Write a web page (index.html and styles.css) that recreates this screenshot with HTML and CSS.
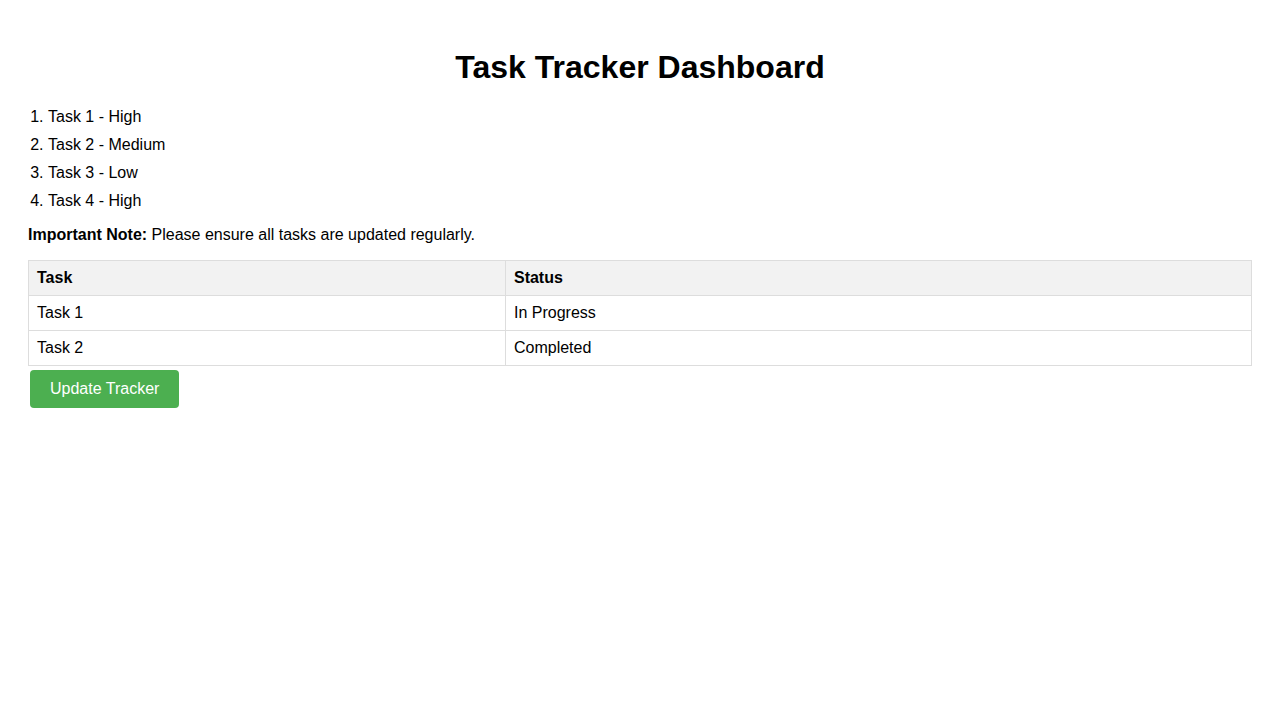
FILE: index.html
```html
<!DOCTYPE html>
<html lang="en">
<head>
<meta charset="utf-8">
<title>Task Tracker Dashboard</title>
<link rel="stylesheet" href="styles.css">
</head>
<body>
<h1 class="title">Task Tracker Dashboard</h1>
<ol class="tasks">
  <li>Task 1 - High</li>
  <li>Task 2 - Medium</li>
  <li>Task 3 - Low</li>
  <li>Task 4 - High</li>
</ol>
<p class="note"><strong>Important Note:</strong> Please ensure all tasks are updated regularly.</p>
<table class="tracker">
  <thead>
    <tr><th class="col-task">Task</th><th>Status</th></tr>
  </thead>
  <tbody>
    <tr><td>Task 1</td><td>In Progress</td></tr>
    <tr><td>Task 2</td><td>Completed</td></tr>
  </tbody>
</table>
<button class="btn" type="button">Update Tracker</button>
</body>
</html>
```

FILE: styles.css
```css
body {
  margin: 8px;
  padding: 20px;
  font-family: "Liberation Sans", Arial, sans-serif;
  font-size: 16px;
  color: #000;
  background: #fff;
}
.title {
  text-align: center;
  font-size: 32px;
  margin: 21.44px 0;
}
.tasks {
  padding-left: 20px;
  margin: 16px 0;
}
.tasks li {
  margin-bottom: 10px;
}
.note {
  margin: 16px 0;
}
.tracker {
  width: 100%;
  border-collapse: collapse;
}
.tracker th,
.tracker td {
  border: 1px solid #ddd;
  padding: 8px;
  text-align: left;
}
.tracker th {
  background: #f2f2f2;
}
.col-task {
  width: 39%;
}
.btn {
  background: #4CAF50;
  color: #fff;
  border: none;
  padding: 10px 20px;
  margin: 4px 2px;
  font-family: "Liberation Sans", Arial, sans-serif;
  font-size: 16px;
  border-radius: 4px;
  cursor: pointer;
}
```
